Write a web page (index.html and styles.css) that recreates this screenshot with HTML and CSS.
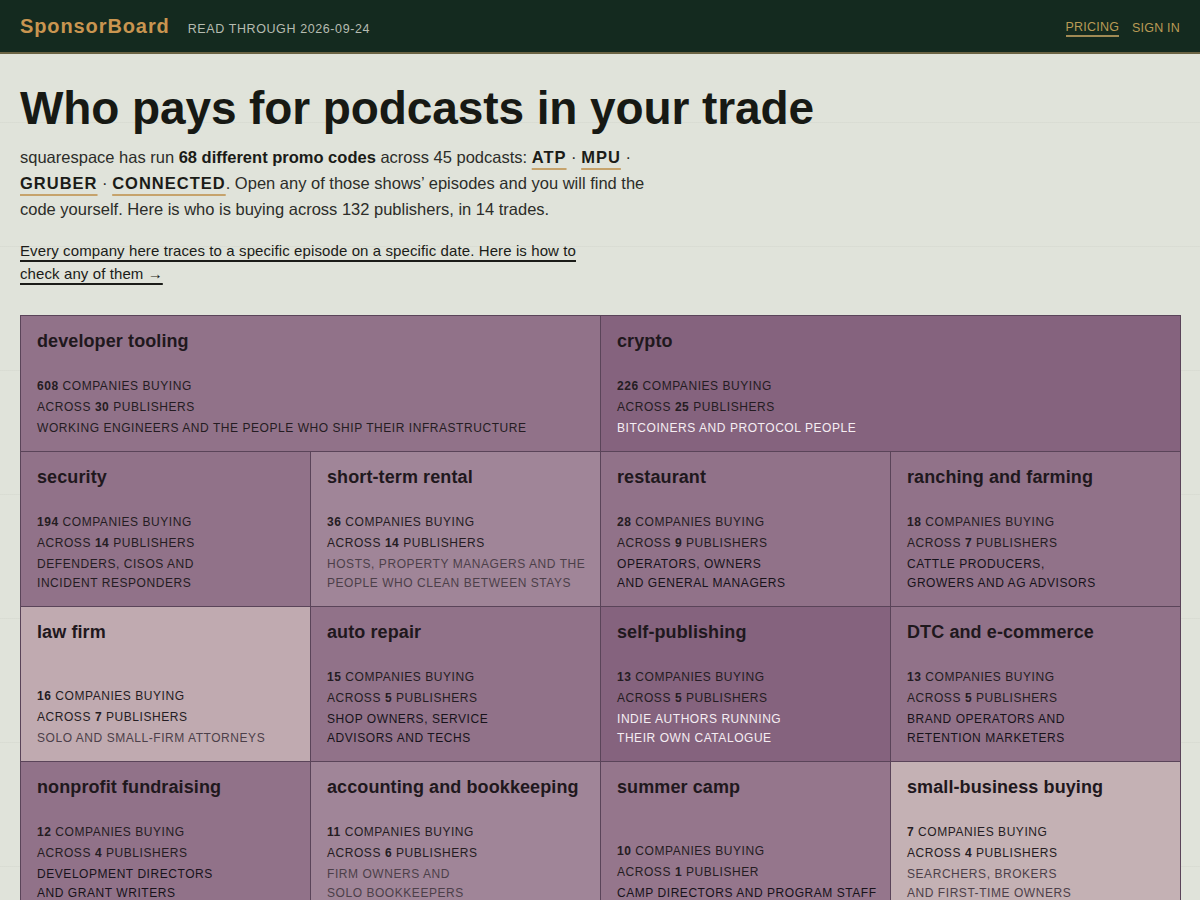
FILE: index.html
```html
<!DOCTYPE html>
<html lang="en">
<head>
<meta charset="utf-8">
<title>SponsorBoard</title>
<link rel="stylesheet" href="styles.css">
</head>
<body>
<header class="topbar">
  <div class="brand">
    <span class="logo">SponsorBoard</span>
    <span class="read">READ THROUGH 2026-09-24</span>
  </div>
  <nav class="nav">
    <a class="nav-link active" href="#">PRICING</a>
    <a class="nav-link" href="#">SIGN IN</a>
  </nav>
</header>
<main class="main">
  <h1 class="title">Who pays for podcasts in your trade</h1>
  <p class="intro"><span>squarespace has run </span><b>68 different promo codes</b><span> across 45 podcasts: </span><a class="code" href="#">ATP</a><span> · </span><a class="code" href="#">MPU</a><span> · </span><a class="code" href="#">GRUBER</a><span> · </span><a class="code" href="#">CONNECTED</a><span>. Open any of those shows’ episodes and you will find the</span> <span>code yourself. Here is who is buying across 132 publishers, in 14 trades.</span></p>
  <p class="method"><a href="#"><span>Every company here traces to a specific episode on a specific date. Here is how to</span> <span>check any of them →</span></a></p>

  <section class="board">
    <div class="tile wide t-c2">
      <h2>developer tooling</h2>
      <div class="stats"><div><b>608</b> COMPANIES BUYING</div><div>ACROSS <b>30</b> PUBLISHERS</div><div class="desc">WORKING ENGINEERS AND THE PEOPLE WHO SHIP THEIR INFRASTRUCTURE</div></div>
    </div>
    <div class="tile wide t-c1">
      <h2>crypto</h2>
      <div class="stats"><div><b>226</b> COMPANIES BUYING</div><div>ACROSS <b>25</b> PUBLISHERS</div><div class="desc light">BITCOINERS AND PROTOCOL PEOPLE</div></div>
    </div>
    <div class="tile t-c2">
      <h2>security</h2>
      <div class="stats"><div><b>194</b> COMPANIES BUYING</div><div>ACROSS <b>14</b> PUBLISHERS</div><div class="desc">DEFENDERS, CISOS AND<br>INCIDENT RESPONDERS</div></div>
    </div>
    <div class="tile t-c3">
      <h2>short-term rental</h2>
      <div class="stats"><div><b>36</b> COMPANIES BUYING</div><div>ACROSS <b>14</b> PUBLISHERS</div><div class="desc muted">HOSTS, PROPERTY MANAGERS AND THE<br>PEOPLE WHO CLEAN BETWEEN STAYS</div></div>
    </div>
    <div class="tile t-c2">
      <h2>restaurant</h2>
      <div class="stats"><div><b>28</b> COMPANIES BUYING</div><div>ACROSS <b>9</b> PUBLISHERS</div><div class="desc dark">OPERATORS, OWNERS<br>AND GENERAL MANAGERS</div></div>
    </div>
    <div class="tile t-c2">
      <h2>ranching and farming</h2>
      <div class="stats"><div><b>18</b> COMPANIES BUYING</div><div>ACROSS <b>7</b> PUBLISHERS</div><div class="desc dark">CATTLE PRODUCERS,<br>GROWERS AND AG ADVISORS</div></div>
    </div>
    <div class="tile t-c4">
      <h2>law firm</h2>
      <div class="stats"><div><b>16</b> COMPANIES BUYING</div><div>ACROSS <b>7</b> PUBLISHERS</div><div class="desc muted">SOLO AND SMALL-FIRM ATTORNEYS</div></div>
    </div>
    <div class="tile t-c2">
      <h2>auto repair</h2>
      <div class="stats"><div><b>15</b> COMPANIES BUYING</div><div>ACROSS <b>5</b> PUBLISHERS</div><div class="desc dark">SHOP OWNERS, SERVICE<br>ADVISORS AND TECHS</div></div>
    </div>
    <div class="tile t-c1">
      <h2>self-publishing</h2>
      <div class="stats"><div><b>13</b> COMPANIES BUYING</div><div>ACROSS <b>5</b> PUBLISHERS</div><div class="desc light">INDIE AUTHORS RUNNING<br>THEIR OWN CATALOGUE</div></div>
    </div>
    <div class="tile t-c2">
      <h2>DTC and e-commerce</h2>
      <div class="stats"><div><b>13</b> COMPANIES BUYING</div><div>ACROSS <b>5</b> PUBLISHERS</div><div class="desc dark">BRAND OPERATORS AND<br>RETENTION MARKETERS</div></div>
    </div>
    <div class="tile t-c2">
      <h2>nonprofit fundraising</h2>
      <div class="stats"><div><b>12</b> COMPANIES BUYING</div><div>ACROSS <b>4</b> PUBLISHERS</div><div class="desc dark">DEVELOPMENT DIRECTORS<br>AND GRANT WRITERS</div></div>
    </div>
    <div class="tile t-c3">
      <h2>accounting and bookkeeping</h2>
      <div class="stats"><div><b>11</b> COMPANIES BUYING</div><div>ACROSS <b>6</b> PUBLISHERS</div><div class="desc muted">FIRM OWNERS AND<br>SOLO BOOKKEEPERS</div></div>
    </div>
    <div class="tile t-c5">
      <h2>summer camp</h2>
      <div class="stats"><div><b>10</b> COMPANIES BUYING</div><div>ACROSS <b>1</b> PUBLISHER</div><div class="desc dark">CAMP DIRECTORS AND PROGRAM STAFF</div></div>
    </div>
    <div class="tile t-c4b">
      <h2>small-business buying</h2>
      <div class="stats"><div><b>7</b> COMPANIES BUYING</div><div>ACROSS <b>4</b> PUBLISHERS</div><div class="desc muted">SEARCHERS, BROKERS<br>AND FIRST-TIME OWNERS</div></div>
    </div>
  </section>
</main>
</body>
</html>
```
FILE: styles.css
```css
* { box-sizing: border-box; }
html, body { margin: 0; padding: 0; }
body {
  font-family: "Liberation Sans", Arial, sans-serif;
  color: #1d1f1a;
  background-color: #e0e3da;
  background-image: repeating-linear-gradient(to bottom, transparent 0, transparent 122px, rgba(40,50,30,0.035) 122px, rgba(40,50,30,0.035) 123px, transparent 123px, transparent 124px);
}
.topbar {
  height: 54px;
  background: #142a1f;
  border-bottom: 2px solid #6b6444;
  display: flex;
  align-items: center;
  justify-content: space-between;
  padding: 0 20px;
}
.brand { display: flex; align-items: baseline; gap: 18px; }
.logo {
  color: #c99550;
  font-weight: 700;
  font-size: 20px;
  letter-spacing: 0.9px;
}
.read {
  color: #b6bcb1;
  font-size: 12.5px;
  letter-spacing: 0.6px;
}
.nav { display: flex; gap: 13px; align-items: center; padding-top: 4px; }
.nav-link {
  color: #b99a55;
  text-decoration: none;
  font-size: 12.5px;
  letter-spacing: 0.2px;
  padding-bottom: 1px;
}
.nav-link.active { border-bottom: 2px solid #a08a55; }
.main { padding: 0 20px 40px; }
.title {
  font-size: 46px;
  line-height: 50px;
  font-weight: 700;
  margin: 29px 0 11px;
  letter-spacing: -0.1px;
  color: #171914;
}
.intro {
  font-size: 16.5px;
  line-height: 26px;
  max-width: 660px;
  margin: 0 0 17px;
  color: #2c2d29;
}
.intro b { font-weight: 700; color: #1a1b17; }
.code {
  font-weight: 700;
  color: #1b1c18;
  letter-spacing: 1px;
  text-decoration: underline;
  text-decoration-color: #c6a36c;
  text-decoration-thickness: 2px;
  text-underline-offset: 5px;
}
.method {
  margin: 0 0 30px;
  font-size: 15px;
  line-height: 23px;
  max-width: 585px;
  letter-spacing: 0.1px;
}
.method a {
  color: #1b1c18;
  text-decoration: underline;
  text-decoration-thickness: 2px;
  text-underline-offset: 4px;
}
.board {
  display: grid;
  grid-template-columns: repeat(4, 290px);
  grid-template-rows: 136px 155px 155px 155px;
}
.tile {
  border: 1px solid #5a4459;
  margin: 0 -1px -1px 0;
  padding: 15px 16px 13px;
  display: flex;
  flex-direction: column;
  justify-content: space-between;
  color: #241c22;
}
.tile.wide { grid-column: span 2; }
.tile h2 {
  margin: 0;
  font-size: 18px;
  line-height: 20px;
  font-weight: 700;
  letter-spacing: 0.1px;
  color: #1f181d;
}
.stats {
  font-size: 12px;
  letter-spacing: 0.55px;
  line-height: 21px;
  white-space: nowrap;
}
.stats b { font-weight: 700; }
.desc { line-height: 19px; margin-top: 1px; }
.desc.light { color: #f5eef3; }
.desc.muted { color: #4c3f49; }
.desc.dark { color: #17121a; }
.t-c1 { background: #85637e; }
.t-c2 { background: #917289; }
.t-c3 { background: #a08598; }
.t-c4 { background: #c0aab0; }
.t-c4b { background: #c4b1b4; }
.t-c5 { background: #95768c; }
```
